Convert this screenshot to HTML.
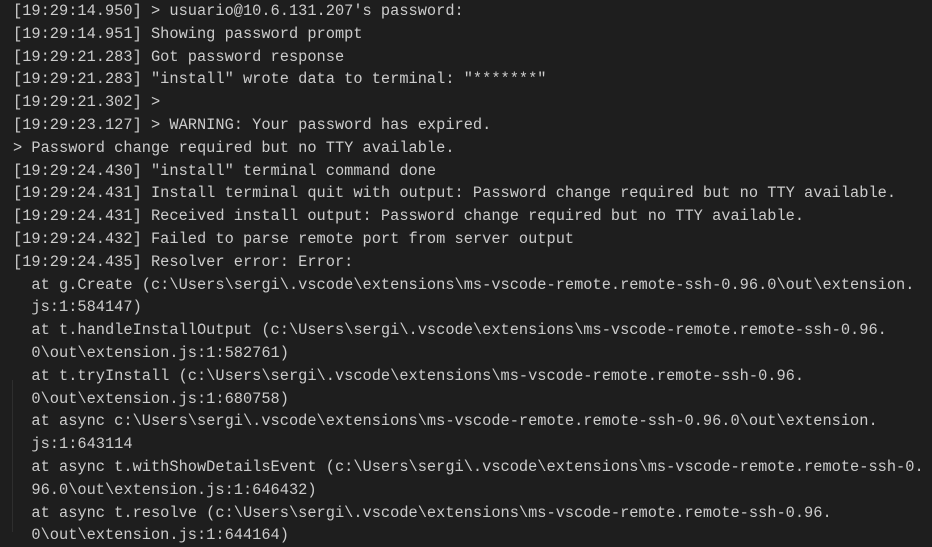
<!DOCTYPE html>
<html><head><meta charset="utf-8"><style>
html,body{margin:0;padding:0;background:#1e1e1e;width:932px;height:532px;overflow:hidden}
pre{margin:0;position:absolute;left:13px;top:0;font-family:"Liberation Mono",monospace;font-size:15.33px;line-height:22.8px;color:#cccccc;white-space:pre}
.g{position:absolute;left:12px;top:380px;width:1px;height:152px;background:#2e2e2e}
</style></head><body>
<div class="g"></div>
<pre>[19:29:14.950] &gt; usuario@10.6.131.207's password:
[19:29:14.951] Showing password prompt
[19:29:21.283] Got password response
[19:29:21.283] "install" wrote data to terminal: "*******"
[19:29:21.302] &gt;
[19:29:23.127] &gt; WARNING: Your password has expired.
&gt; Password change required but no TTY available.
[19:29:24.430] "install" terminal command done
[19:29:24.431] Install terminal quit with output: Password change required but no TTY available.
[19:29:24.431] Received install output: Password change required but no TTY available.
[19:29:24.432] Failed to parse remote port from server output
[19:29:24.435] Resolver error: Error:
  at g.Create (c:\Users\sergi\.vscode\extensions\ms-vscode-remote.remote-ssh-0.96.0\out\extension.
  js:1:584147)
  at t.handleInstallOutput (c:\Users\sergi\.vscode\extensions\ms-vscode-remote.remote-ssh-0.96.
  0\out\extension.js:1:582761)
  at t.tryInstall (c:\Users\sergi\.vscode\extensions\ms-vscode-remote.remote-ssh-0.96.
  0\out\extension.js:1:680758)
  at async c:\Users\sergi\.vscode\extensions\ms-vscode-remote.remote-ssh-0.96.0\out\extension.
  js:1:643114
  at async t.withShowDetailsEvent (c:\Users\sergi\.vscode\extensions\ms-vscode-remote.remote-ssh-0.
  96.0\out\extension.js:1:646432)
  at async t.resolve (c:\Users\sergi\.vscode\extensions\ms-vscode-remote.remote-ssh-0.96.
  0\out\extension.js:1:644164)</pre>
</body></html>
